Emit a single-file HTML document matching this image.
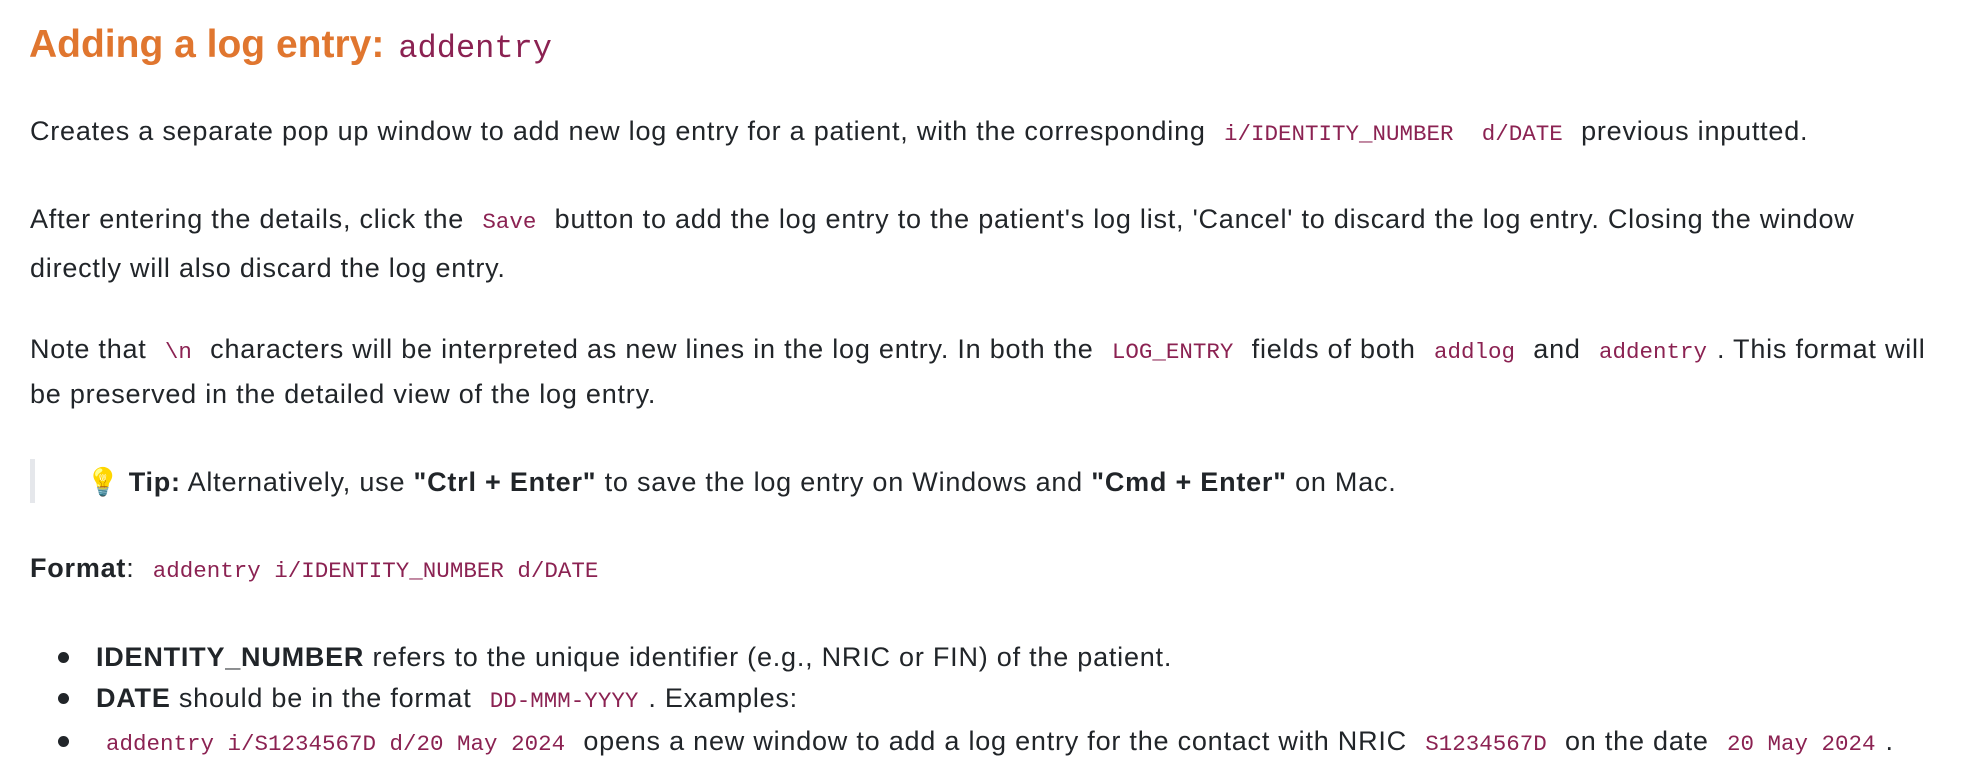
<!DOCTYPE html>
<html><head><meta charset="utf-8"><style>
body{margin:0;width:1988px;height:768px;background:#fff;overflow:hidden;font-family:"Liberation Sans",sans-serif;color:#212529;position:relative}
.l{position:absolute;left:30px;white-space:nowrap;font-size:27px;line-height:40px;letter-spacing:0.78px}
code{font-family:"Liberation Mono",monospace;font-size:22.5px;color:#8b2252;padding:0 10px;letter-spacing:0}
h1{position:absolute;left:29px;top:18px;margin:0;font-size:39px;line-height:54px;color:#e0762f;font-weight:bold;letter-spacing:0;white-space:nowrap}
h1 code{font-size:32px;padding-left:14px;font-weight:normal}
b{font-weight:bold}
.bar{position:absolute;left:30px;top:459px;width:5px;height:44px;background:#e5e7eb}
.dot{position:absolute;left:58px;width:11px;height:11px;border-radius:50%;background:#212529}
</style></head><body>
<h1>Adding a log entry:<code>addentry</code></h1>
<div class="l" style="top:111px">Creates a separate pop up window to add new log entry for a patient, with the corresponding <code>i/IDENTITY_NUMBER</code> <code>d/DATE</code> previous inputted.</div>
<div class="l" style="top:199px">After entering the details, click the <code>Save</code> button to add the log entry to the patient's log list, 'Cancel' to discard the log entry. Closing the window</div>
<div class="l" style="top:248px">directly will also discard the log entry.</div>
<div class="l" style="top:329px">Note that <code>\n</code> characters will be interpreted as new lines in the log entry. In both the <code>LOG_ENTRY</code> fields of both <code>addlog</code> and <code>addentry</code>. This format will</div>
<div class="l" style="top:374px">be preserved in the detailed view of the log entry.</div>
<div class="bar"></div>
<div class="l" style="top:462px;left:86px">💡 <b>Tip:</b> Alternatively, use <b>"Ctrl + Enter"</b> to save the log entry on Windows and <b>"Cmd + Enter"</b> on Mac.</div>
<div class="l" style="top:548px"><b>Format</b>: <code>addentry i/IDENTITY_NUMBER d/DATE</code></div>
<div class="dot" style="top:652px"></div>
<div class="l" style="top:637px;left:96px"><b>IDENTITY_NUMBER</b> refers to the unique identifier (e.g., NRIC or FIN) of the patient.</div>
<div class="dot" style="top:693px"></div>
<div class="l" style="top:678px;left:96px"><b>DATE</b> should be in the format <code>DD-MMM-YYYY</code>. Examples:</div>
<div class="dot" style="top:736px"></div>
<div class="l" style="top:721px;left:96px"><code>addentry i/S1234567D d/20 May 2024</code> opens a new window to add a log entry for the contact with NRIC <code>S1234567D</code> on the date <code>20 May 2024</code>.</div>
</body></html>
